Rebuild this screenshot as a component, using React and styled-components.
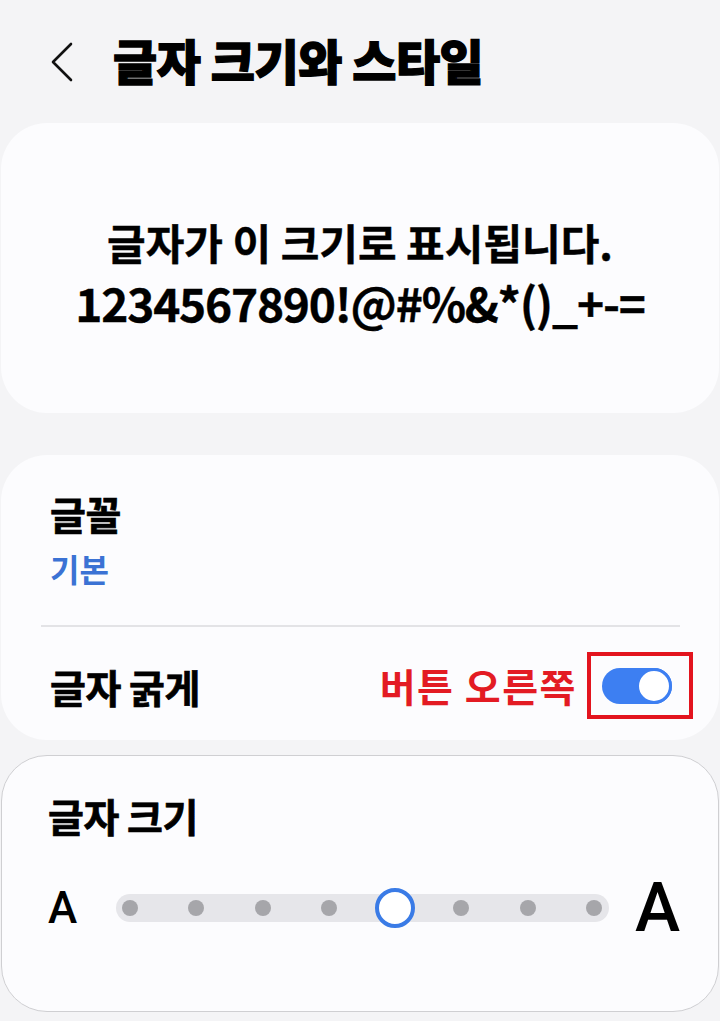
import React from 'react';
import styled, { createGlobalStyle } from 'styled-components';

const GlobalStyle = createGlobalStyle`
  html, body {
    margin: 0;
    padding: 0;
    background: #f4f4f6;
  }
  body {
    font-family: 'Noto Sans CJK KR', 'Noto Sans', sans-serif;
    color: #000;
  }
`;

const Page = styled.div`
  width: 720px;
  min-height: 1021px;
  background: #f4f4f6;
  overflow: hidden;
`;

const Header = styled.header`
  height: 123px;
  display: flex;
  align-items: center;
  padding: 0 0 5px 50px;
  box-sizing: border-box;
`;

const BackButton = styled.button`
  width: 26px;
  height: 40px;
  padding: 0;
  border: none;
  background: none;
  display: flex;
  align-items: center;
  margin: 5px 37px 0 0;
`;

// heavy headline: the installed bold is thickened a little with a stroke
const Title = styled.h1`
  margin: 0;
  font-size: 48px;
  font-weight: 900;
  letter-spacing: -0.5px;
  line-height: 1;
  -webkit-text-stroke: 1.3px #000;
`;

const Card = styled.section`
  margin: 0 1px ${(p) => p.gap || 0}px;
  background: #fcfcfe;
  border-radius: 46px;
  box-sizing: border-box;
  height: ${(p) => p.height}px;
  border: ${(p) => (p.outlined ? '1px solid #cfcfd2' : 'none')};
`;

const Preview = styled(Card)`
  display: flex;
  flex-direction: column;
  align-items: center;
  justify-content: center;
  padding-top: 8px;
`;

const PreviewLine = styled.div`
  font-size: ${(p) => p.size}px;
  font-weight: 700;
  letter-spacing: ${(p) => p.spacing || 0}px;
  line-height: 60px;
  white-space: nowrap;
  -webkit-text-stroke: 0.4px #000;
`;

const SettingsCard = styled(Card)`
  display: flex;
  flex-direction: column;
  padding: 35px 26px 0 49px;
`;

const Label = styled.div`
  font-size: 39px;
  font-weight: 700;
  letter-spacing: -0.5px;
  line-height: 46px;
  -webkit-text-stroke: 0.7px #000;
`;

const SubValue = styled.div`
  font-size: 32px;
  font-weight: 700;
  color: #3b72d4;
  line-height: 38px;
  margin-top: 13px;
`;

const Divider = styled.hr`
  margin: 38px 13px 0 -9px;
  border: none;
  border-top: 2px solid #e3e3e6;
`;

const ToggleRow = styled.div`
  display: flex;
  align-items: center;
  justify-content: space-between;
  margin-top: 25px;
`;

const RightGroup = styled.div`
  display: flex;
  align-items: center;
  gap: 10px;
`;

const Annotation = styled.span`
  color: #e31b23;
  font-size: 39px;
  font-weight: 700;
  letter-spacing: 1.5px;
  line-height: 1;
`;

const Highlight = styled.div`
  width: 106px;
  height: 67px;
  box-sizing: border-box;
  border: 4px solid #e3141e;
  display: flex;
  align-items: center;
  justify-content: center;
  padding-right: 6px;
`;

const Switch = styled.div`
  width: 70px;
  height: 36px;
  border-radius: 18px;
  background: #3d7ff2;
  display: flex;
  justify-content: ${(p) => (p.on ? 'flex-end' : 'flex-start')};
`;

const Knob = styled.div`
  width: 36px;
  height: 36px;
  box-sizing: border-box;
  border-radius: 50%;
  background: #fff;
  border: 3px solid #3d7ff2;
`;

const SizeCard = styled(Card)`
  padding: 36px 0 0 46px;
`;

const SliderRow = styled.div`
  display: flex;
  align-items: center;
  margin-top: 36px;
`;

const SizeGlyph = styled.span`
  font-family: Roboto, 'Noto Sans', sans-serif;
  font-weight: 500;
  font-size: ${(p) => p.size}px;
  line-height: 1;
  width: ${(p) => p.w}px;
`;

const Track = styled.div`
  width: 493px;
  height: 28px;
  border-radius: 14px;
  background: #e6e6ea;
  display: flex;
  align-items: center;
  justify-content: space-between;
  padding: 0 7px 0 6px;
  box-sizing: border-box;
  margin: 0 26px 0 36px;
`;

const Stop = styled.span`
  width: ${(p) => (p.active ? 40 : 16)}px;
  height: ${(p) => (p.active ? 40 : 16)}px;
  margin: ${(p) => (p.active ? '0 -12px' : 0)};
  box-sizing: border-box;
  border-radius: 50%;
  background: ${(p) => (p.active ? '#fff' : '#a6a6aa')};
  border: ${(p) => (p.active ? '4px solid #3a7be6' : 'none')};
`;

const Chevron = () => (
  <svg width="26" height="40" viewBox="0 0 26 40">
    <polyline
      points="21,2 3,20 21,38"
      fill="none"
      stroke="#111"
      strokeWidth="2.6"
      strokeLinecap="round"
      strokeLinejoin="round"
    />
  </svg>
);

const STOPS = 8;
const CURRENT = 4;

export default function App() {
  return (
    <Page>
      <GlobalStyle />
      <Header>
        <BackButton aria-label="뒤로">
          <Chevron />
        </BackButton>
        <Title>글자 크기와 스타일</Title>
      </Header>

      <Preview height={290} gap={42}>
        <PreviewLine size={42}>글자가 이 크기로 표시됩니다.</PreviewLine>
        <PreviewLine size={46} spacing={-1.2}>1234567890!@#%&amp;*()_+-=</PreviewLine>
      </Preview>

      <SettingsCard height={285} gap={15}>
        <Label>글꼴</Label>
        <SubValue>기본</SubValue>
        <Divider />
        <ToggleRow>
          <Label>글자 굵게</Label>
          <RightGroup>
            <Annotation>버튼 오른쪽</Annotation>
            <Highlight>
              <Switch on>
                <Knob />
              </Switch>
            </Highlight>
          </RightGroup>
        </ToggleRow>
      </SettingsCard>

      <SizeCard height={257} outlined>
        <Label>글자 크기</Label>
        <SliderRow>
          <SizeGlyph size={44} w={32}>A</SizeGlyph>
          <Track>
            {Array.from({ length: STOPS }, (_, i) => (
              <Stop key={i} active={i === CURRENT} />
            ))}
          </Track>
          <SizeGlyph size={68} w={46}>A</SizeGlyph>
        </SliderRow>
      </SizeCard>
    </Page>
  );
}
